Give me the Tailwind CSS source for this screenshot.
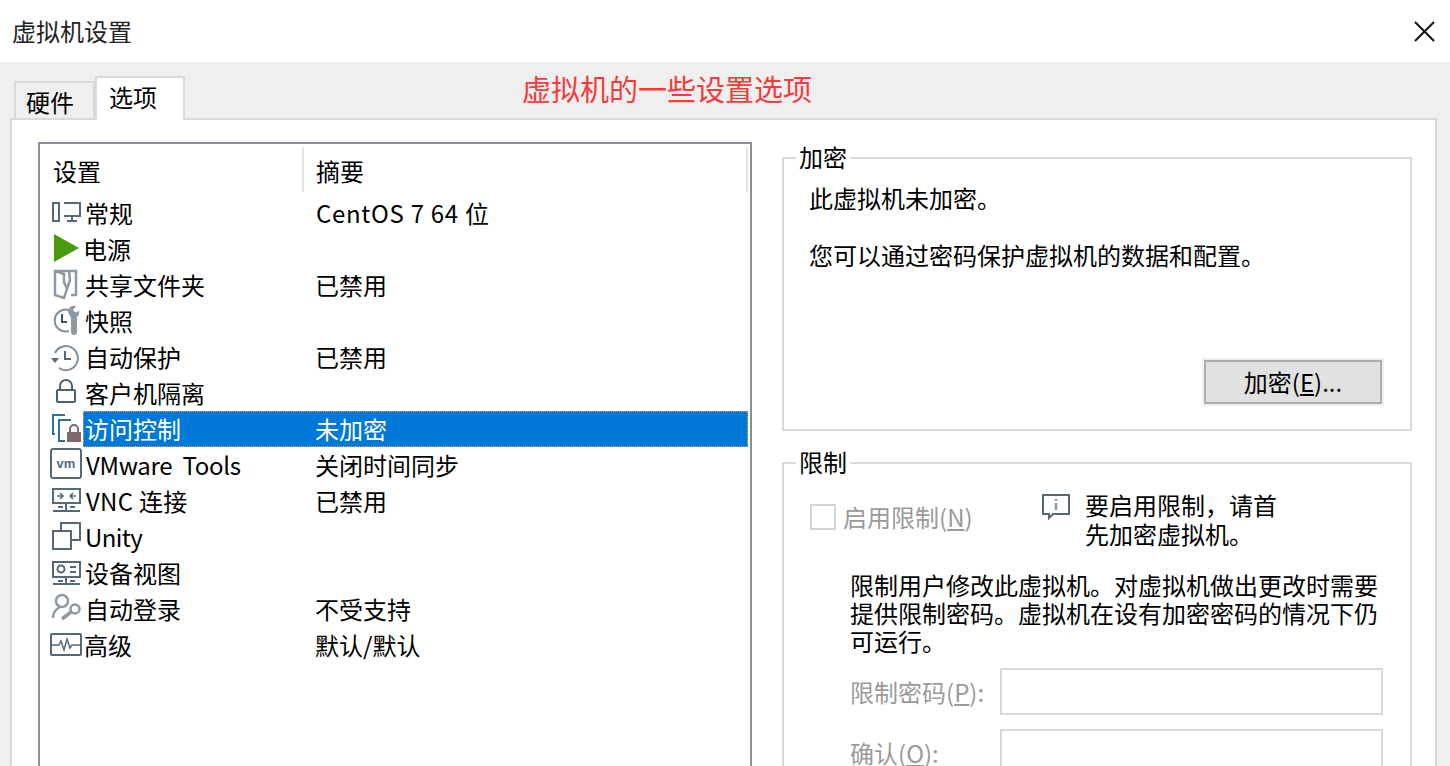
<!DOCTYPE html>
<html lang="zh-CN">
<head>
<meta charset="UTF-8" />
<title>虚拟机设置</title>
<script src="https://cdn.jsdelivr.net/npm/@tailwindcss/browser@4"></script>
</head>
<body class="h-[766px] overflow-hidden bg-[#efefef] text-[24px] leading-[32px] text-black font-['Noto_Sans_CJK_SC','Liberation_Sans',sans-serif]">

<!-- Title bar -->
<header class="h-[62px] bg-white flex items-center justify-between pl-3 pr-[15px]">
  <h1 class="text-[#222]">虚拟机设置</h1>
  <svg class="w-[21px] h-[21px]" viewBox="0 0 21 21" fill="none" stroke="#111" stroke-width="2"><path d="M1 1l19 19M20 1L1 20"/></svg>
</header>

<!-- Tabs -->
<div class="flex items-start h-[58px] pt-[14px] pl-[14px]">
  <div class="mt-[5px] w-[81px] h-[39px] border-2 border-b-0 border-[#d9d9d9] pl-[10px] pt-[3px]">硬件</div>
  <div class="relative z-10 w-[90px] h-[44px] bg-white border-2 border-b-0 border-[#d9d9d9] pl-[12px] pt-[3px]">选项</div>
  <div class="ml-[337px] -mt-[6px] text-[29px] leading-[36px] text-[#f53b3b] whitespace-nowrap">虚拟机的一些设置选项</div>
</div>

<!-- Panel -->
<main class="-mt-[2px] ml-[10px] w-[1427px] h-[648px] overflow-hidden bg-white border-2 border-b-0 border-[#d9d9d9] flex pl-[26px] pt-[22px]">

  <!-- Settings list -->
  <section class="w-[714px] h-[680px] border-2 border-[#8a8e9b] shrink-0">
    <div class="flex h-[51px] pt-[3px] pr-[2px]">
      <div class="w-[264px] h-[45px] pl-[13px] pt-[8px] border-r-2 border-[#e3e3e3]">设置</div>
      <div class="flex-1 h-[45px] pl-[12px] pt-[8px] border-r-2 border-[#e3e3e3]">摘要</div>
    </div>

    <div class="flex flex-col pl-2 pr-[2px]">
      <div class="flex h-9">
        <svg class="w-[35px] h-9 shrink-0" viewBox="0 0 35 36" fill="none" stroke="#56697a" stroke-width="2"><path d="M5 8h6v18H5zM16 8h16v13H16M24 21v4M19 26h10"/></svg>
        <div class="flex-1 flex items-center"><span class="w-[232px] pl-[2px]">常规</span><span class="pl-[1px] tracking-[0.7px]">CentOS 7 64 位</span></div>
      </div>
      <div class="flex h-9">
        <svg class="w-[35px] h-9 shrink-0" viewBox="0 0 35 36"><path d="M6 3l25 14L6 31z" fill="#4a9a10"/></svg>
        <div class="flex-1 flex items-center"><span class="w-[232px]">电源</span></div>
      </div>
      <div class="flex h-9">
        <svg class="w-[35px] h-9 shrink-0" viewBox="0 0 35 36" fill="none" stroke="#8d9aa5" stroke-width="2.5"><path d="M7 4h21v24h-5M7 4v24l9 3 3-9-3-7V7L7 4zM19 22l3-9-1-9"/></svg>
        <div class="flex-1 flex items-center"><span class="w-[232px] pl-[2px]">共享文件夹</span><span>已禁用</span></div>
      </div>
      <div class="flex h-9">
        <svg class="w-[35px] h-9 shrink-0" viewBox="0 0 35 36" fill="none"><path d="M21 7a11 11 0 1 0 0 21" stroke="#7f8f9b" stroke-width="2"/><path d="M14 11v8h5" stroke="#3f5261" stroke-width="2"/><path d="M26 12v17" stroke="#8d9aa5" stroke-width="6" stroke-linecap="round"/><path d="M20 9a6 6 0 0 1 8-6l-3 4 2 3 4-2a6 6 0 0 1-8 7z" fill="#8d9aa5"/></svg>
        <div class="flex-1 flex items-center"><span class="w-[232px] pl-[2px]">快照</span></div>
      </div>
      <div class="flex h-9">
        <svg class="w-[35px] h-9 shrink-0" viewBox="0 0 35 36" fill="none"><path d="M7 14a12 12 0 1 1 4 15" stroke="#7f8f9b" stroke-width="2"/><path d="M17 12v8h6" stroke="#56697a" stroke-width="2"/><path d="M3 19h8l-4 5z" fill="#56697a"/></svg>
        <div class="flex-1 flex items-center"><span class="w-[232px] pl-[2px]">自动保护</span><span>已禁用</span></div>
      </div>
      <div class="flex h-9">
        <svg class="w-[35px] h-9 shrink-0" viewBox="0 0 35 36" fill="none" stroke="#4d6170" stroke-width="2"><rect x="9" y="15" width="18" height="12" rx="1"/><path d="M12 15V11a6 6 0 0 1 12 0v4"/></svg>
        <div class="flex-1 flex items-center"><span class="w-[232px] pl-[2px]">客户机隔离</span></div>
      </div>
      <div class="flex h-9">
        <svg class="w-[35px] h-9 shrink-0" viewBox="0 0 35 36" fill="none"><path d="M17 4H5v19h2" stroke="#2f6f9f" stroke-width="2"/><path d="M23 9H11v21h6" stroke="#2f6f9f" stroke-width="2"/><rect x="19" y="21" width="14" height="10" fill="#7d6a6a"/><path d="M22 21v-3a4 4 0 0 1 8 0v3" stroke="#7d6a6a" stroke-width="2"/></svg>
        <div class="flex-1 flex items-center bg-[#0078d7] text-white border border-dotted border-[#f0a050]"><span class="w-[231px] pl-[1px]">访问控制</span><span>未加密</span></div>
      </div>
      <div class="flex h-9">
        <svg class="w-[35px] h-9 shrink-0" viewBox="0 0 35 36" fill="none"><rect x="3" y="2" width="30" height="29" rx="2" stroke="#56697a" stroke-width="2"/><text x="18" y="21" text-anchor="middle" font-size="13" font-weight="700" fill="#56697a" font-family="Liberation Sans">vm</text></svg>
        <div class="flex-1 flex items-center"><span class="w-[232px] pl-[3px] tracking-[-0.3px]">VMware&nbsp; Tools</span><span>关闭时间同步</span></div>
      </div>
      <div class="flex h-9">
        <svg class="w-[35px] h-9 shrink-0" viewBox="0 0 35 36" fill="none" stroke="#56697a" stroke-width="2"><path d="M5 6h27v14H5zM5 28h27M18 20v8M10 24h5M22 24h5"/><path d="M9 13h6M12 10l3 3-3 3M28 13h-6M25 10l-3 3 3 3" stroke-width="1.5"/></svg>
        <div class="flex-1 flex items-center"><span class="w-[232px] pl-[3px] tracking-[0.3px]">VNC 连接</span><span>已禁用</span></div>
      </div>
      <div class="flex h-9">
        <svg class="w-[35px] h-9 shrink-0" viewBox="0 0 35 36" fill="none" stroke="#56697a" stroke-width="2"><rect x="5" y="12" width="18" height="18"/><path d="M13 12V4h19v17h-9"/></svg>
        <div class="flex-1 flex items-center"><span class="w-[232px] pl-[2px] tracking-[-0.6px]">Unity</span></div>
      </div>
      <div class="flex h-9">
        <svg class="w-[35px] h-9 shrink-0" viewBox="0 0 35 36" fill="none" stroke="#56697a" stroke-width="2"><path d="M5 7h27v15H5zM5 29h27M18 22v7M10 26h5M22 26h5M22 12h6M22 17h6"/><circle cx="13" cy="14" r="3.5"/></svg>
        <div class="flex-1 flex items-center"><span class="w-[232px] pl-[2px]">设备视图</span></div>
      </div>
      <div class="flex h-9">
        <svg class="w-[35px] h-9 shrink-0" viewBox="0 0 35 36" fill="none" stroke="#8d9aa5" stroke-width="2.5"><circle cx="14" cy="10" r="6"/><path d="M5 27c0-5 3-9 7-11"/><circle cx="27" cy="18" r="4.5"/><path d="M23 21l-9 7" stroke-width="3.5"/></svg>
        <div class="flex-1 flex items-center"><span class="w-[232px] pl-[2px]">自动登录</span><span>不受支持</span></div>
      </div>
      <div class="flex h-9">
        <svg class="w-[35px] h-9 shrink-0" viewBox="0 0 35 36" fill="none" stroke="#56697a" stroke-width="2"><rect x="3" y="7" width="30" height="21" rx="1"/><path d="M3 18h8l2-4 3 9 3-11 3 9 2-3h9" stroke-width="1.5"/></svg>
        <div class="flex-1 flex items-center"><span class="w-[232px] pl-[1px]">高级</span><span>默认/默认</span></div>
      </div>
    </div>
  </section>

  <!-- Right column -->
  <section class="ml-[30px] w-[630px] pt-[15px] flex flex-col gap-[31px]">

    <div class="relative shrink-0 h-[274px] border-2 border-[#d9d9d9] flex flex-col pl-[25px]">
      <span class="absolute left-[12px] -top-[18px] bg-white px-[3px]">加密</span>
      <p class="mt-[23px]">此虚拟机未加密。</p>
      <p class="mt-[25px]">您可以通过密码保护虚拟机的数据和配置。</p>
      <button class="mt-auto mb-[25px] mr-[28px] self-end w-[178px] h-[44px] bg-[#e1e1e1] border-2 border-[#adadad] ring-2 ring-[#f0f0f0]">加密(<span class="underline">E</span>)...</button>
    </div>

    <div class="relative shrink-0 h-[400px] border-2 border-[#d9d9d9] pl-[26px]">
      <span class="absolute left-[12px] -top-[18px] bg-white px-[3px]">限制</span>
      <div class="flex items-start pt-[26px]">
        <label class="flex items-center gap-[7px] text-[#9a9a9a] mt-[11px] w-[232px]">
          <span class="w-[26px] h-[26px] border-2 border-[#d4d4d4]"></span>
          <span>启用限制(<span class="underline">N</span>)</span>
        </label>
        <svg class="w-[28px] h-[26px] shrink-0 mt-[4px]" viewBox="0 0 28 26" fill="none"><path d="M1 1h26v19H11l-4 4v-4H1z" stroke="#56697a" stroke-width="2"/><path d="M14 5v2M14 9v7" stroke="#8d9aa5" stroke-width="2.5"/></svg>
        <p class="ml-[15px] leading-[29px]">要启用限制，请首<br />先加密虚拟机。</p>
      </div>
      <p class="mt-[23px] ml-[40px] w-[530px] leading-[28px]">限制用户修改此虚拟机。对虚拟机做出更改时需要提供限制密码。虚拟机在设有加密密码的情况下仍可运行。</p>
      <div class="mt-[13px] ml-[40px] flex items-center text-[#9a9a9a]">
        <span class="w-[150px]">限制密码(<span class="underline">P</span>):</span>
        <span class="w-[383px] h-[47px] border-2 border-[#d9d9d9]"></span>
      </div>
      <div class="mt-[14px] ml-[40px] flex items-center text-[#9a9a9a]">
        <span class="w-[150px]">确认(<span class="underline">O</span>):</span>
        <span class="w-[383px] h-[47px] border-2 border-[#d9d9d9]"></span>
      </div>
    </div>
  </section>
</main>
</body>
</html>
